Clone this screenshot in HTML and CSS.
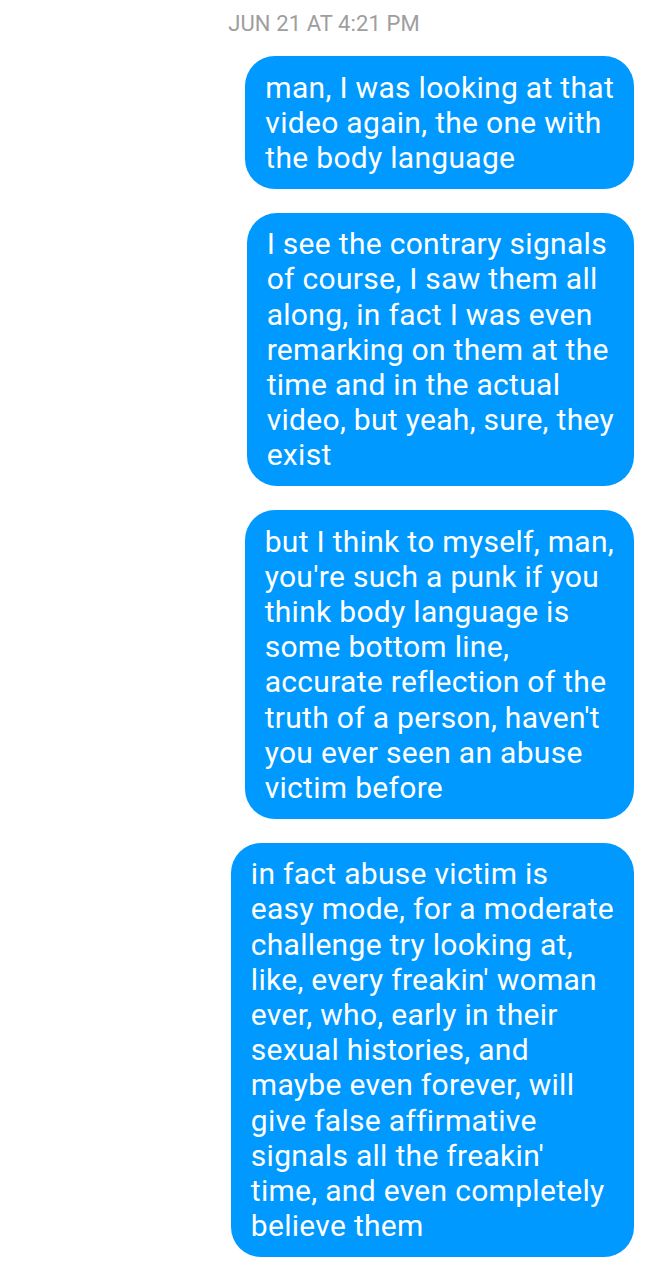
FILE: index.html
```html
<!DOCTYPE html>
<html>
<head>
<meta charset="utf-8">
<link rel="stylesheet" href="styles.css">
</head>
<body>
<div class="thread">
  <div class="stamp">JUN 21 AT 4:21 PM</div>
  <div class="bubble">man, I was looking at that<br>video again, the one with<br>the body language</div>
  <div class="bubble">I see the contrary signals<br>of course, I saw them all<br>along, in fact I was even<br>remarking on them at the<br>time and in the actual<br>video, but yeah, sure, they<br>exist</div>
  <div class="bubble">but I think to myself, man,<br>you're such a punk if you<br>think body language is<br>some bottom line,<br>accurate reflection of the<br>truth of a person, haven't<br>you ever seen an abuse<br>victim before</div>
  <div class="bubble">in fact abuse victim is<br>easy mode, for a moderate<br>challenge try looking at,<br>like, every freakin' woman<br>ever, who, early in their<br>sexual histories, and<br>maybe even forever, will<br>give false affirmative<br>signals all the freakin'<br>time, and even completely<br>believe them</div>
</div>
</body>
</html>
```
FILE: styles.css
```css
html, body {
  margin: 0;
  padding: 0;
  background: #ffffff;
}
.thread {
  display: flex;
  flex-direction: column;
  align-items: flex-end;
  gap: 24px;
  padding: 11px 14px 20px 14px;
  font-family: Roboto, "Noto Sans", sans-serif;
}
.stamp {
  align-self: center;
  font-size: 22px;
  line-height: 26px;
  letter-spacing: 0.1px;
  color: #9e9e9e;
  margin-bottom: -5px;
}
.bubble {
  background: #0099ff;
  color: #ffffff;
  font-size: 30px;
  line-height: 35.2px;
  letter-spacing: 0.3px;
  padding: 13.5px 20px;
  border-radius: 30px;
  white-space: nowrap;
  width: fit-content;
}
```
